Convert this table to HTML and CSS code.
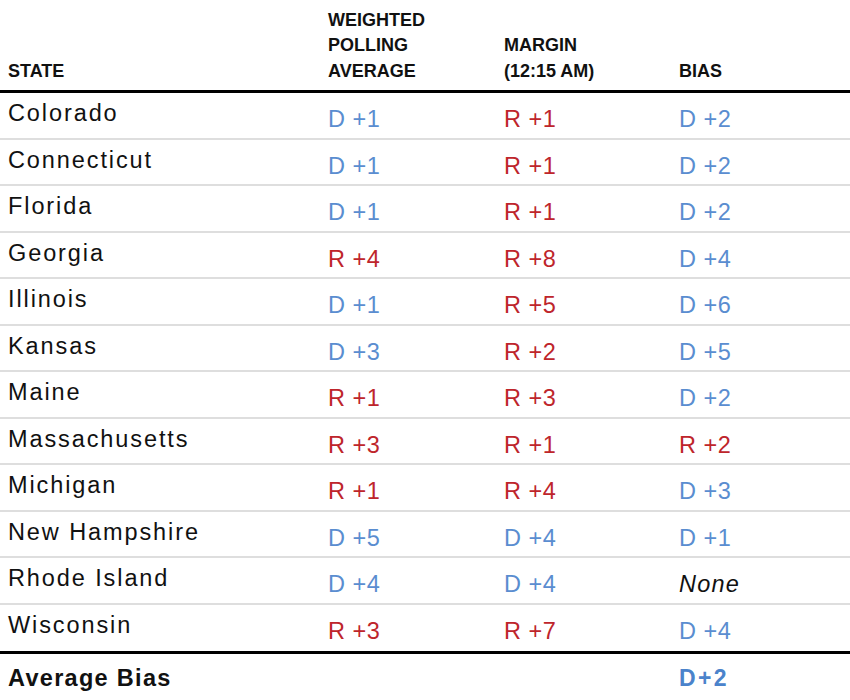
FILE: index.html
```html
<!DOCTYPE html>
<html lang="en">
<head>
<meta charset="utf-8">
<title>Polling bias</title>
<link rel="stylesheet" href="styles.css">
</head>
<body>
<div class="table">
  <div class="head">
    <div class="hcell name-col">STATE</div>
    <div class="hcell">WEIGHTED<br>POLLING<br>AVERAGE</div>
    <div class="hcell">MARGIN<br>(12:15 AM)</div>
    <div class="hcell">BIAS</div>
  </div>
  <div class="row"><div class="name">Colorado</div><div class="val d">D +1</div><div class="val r">R +1</div><div class="val d">D +2</div></div>
  <div class="row"><div class="name">Connecticut</div><div class="val d">D +1</div><div class="val r">R +1</div><div class="val d">D +2</div></div>
  <div class="row"><div class="name">Florida</div><div class="val d">D +1</div><div class="val r">R +1</div><div class="val d">D +2</div></div>
  <div class="row"><div class="name">Georgia</div><div class="val r">R +4</div><div class="val r">R +8</div><div class="val d">D +4</div></div>
  <div class="row"><div class="name">Illinois</div><div class="val d">D +1</div><div class="val r">R +5</div><div class="val d">D +6</div></div>
  <div class="row"><div class="name">Kansas</div><div class="val d">D +3</div><div class="val r">R +2</div><div class="val d">D +5</div></div>
  <div class="row"><div class="name">Maine</div><div class="val r">R +1</div><div class="val r">R +3</div><div class="val d">D +2</div></div>
  <div class="row"><div class="name">Massachusetts</div><div class="val r">R +3</div><div class="val r">R +1</div><div class="val r">R +2</div></div>
  <div class="row"><div class="name">Michigan</div><div class="val r">R +1</div><div class="val r">R +4</div><div class="val d">D +3</div></div>
  <div class="row"><div class="name">New Hampshire</div><div class="val d">D +5</div><div class="val d">D +4</div><div class="val d">D +1</div></div>
  <div class="row"><div class="name">Rhode Island</div><div class="val d">D +4</div><div class="val d">D +4</div><div class="val none">None</div></div>
  <div class="row last"><div class="name">Wisconsin</div><div class="val r">R +3</div><div class="val r">R +7</div><div class="val d">D +4</div></div>
  <div class="foot">
    <div class="fname">Average Bias</div>
    <div></div>
    <div></div>
    <div class="fval">D+2</div>
  </div>
</div>
</body>
</html>
```

FILE: styles.css
```css
* { box-sizing: border-box; }

html, body {
  margin: 0;
  padding: 0;
  background: #ffffff;
}

body {
  font-family: "Liberation Sans", Arial, sans-serif;
  color: #111111;
  width: 850px;
}

.head,
.row,
.foot {
  display: grid;
  grid-template-columns: 328px 176px 175px 1fr;
}

.head {
  height: 93px;
  align-items: end;
  border-bottom: 3px solid #000000;
  padding-bottom: 6px;
}

.hcell {
  font-size: 18px;
  font-weight: bold;
  line-height: 25.5px;
  color: #111111;
}

.name-col {
  padding-left: 8px;
}

.row {
  height: 46.5px;
  align-items: start;
  border-bottom: 2px solid #dedede;
}

.row.last {
  border-bottom: none;
}

.name {
  padding-left: 8px;
  padding-top: 8px;
  font-size: 23.5px;
  line-height: 24px;
  letter-spacing: 1.9px;
  color: #111111;
}

.val {
  padding-top: 14px;
  font-size: 23.5px;
  line-height: 24px;
  letter-spacing: 0.5px;
}

.d { color: #5a8dd0; }
.r { color: #be252b; }

.none {
  font-style: italic;
  color: #111111;
  letter-spacing: 1.2px;
}

.foot {
  border-top: 3px solid #000000;
  height: 49px;
  align-items: start;
}

.fname {
  padding-left: 8px;
  padding-top: 12px;
  font-size: 23.5px;
  font-weight: bold;
  line-height: 24px;
  letter-spacing: 1.3px;
}

.fval {
  padding-top: 12px;
  font-size: 23px;
  font-weight: bold;
  line-height: 24px;
  letter-spacing: 2.4px;
  color: #4b83cb;
}
```
